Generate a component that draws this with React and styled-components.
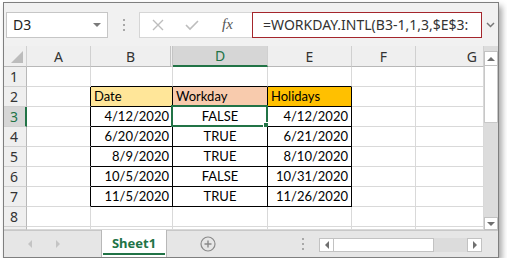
import React from 'react'
import styled, { createGlobalStyle } from 'styled-components'

const GlobalStyle = createGlobalStyle`
  html, body {
    margin: 0;
    padding: 0;
    background: #fff;
  }
  body {
    font-family: "Noto Sans", "Open Sans", sans-serif;
  }
`

const Page = styled.div`
  padding: 2px 0 0 3px;
`

const Window = styled.div`
  box-sizing: border-box;
  width: 496px;
  height: 256px;
  border: 1px solid #7f7f7f;
  background: #fff;
  box-shadow: 3px 4px 6px rgba(0, 0, 0, 0.35);
  display: flex;
  flex-direction: column;
  overflow: hidden;
`

const FormulaBar = styled.div`
  flex: none;
  height: 43px;
  background: #f1f1f1;
  display: flex;
  align-items: center;
  padding-left: 2px;
`

const NameBox = styled.div`
  box-sizing: border-box;
  width: 102px;
  height: 26px;
  background: #fff;
  border: 1px solid #c6c6c6;
  display: flex;
  align-items: center;
  justify-content: space-between;
  padding: 0 6px 0 6px;
  font-size: 14px;
  color: #222;
`

const Grip = styled.div`
  width: 2px;
  margin: 0 14px 0 15px;
  display: flex;
  flex-direction: column;
  gap: 3px;

  > span {
    width: 2px;
    height: 2px;
    background: #a8a8a8;
  }
`

const ButtonBox = styled.div`
  box-sizing: border-box;
  width: 113px;
  height: 26px;
  background: #fff;
  border: 1px solid #d6d6d6;
  border-right: none;
  display: flex;
  align-items: center;
  padding-left: 12px;
  gap: 21px;
`

const Fx = styled.span`
  font-family: "Liberation Serif", "DejaVu Serif", serif;
  font-style: italic;
  font-size: 15px;
  color: #555;
  margin-left: 2px;
`

const FormulaInput = styled.div`
  box-sizing: border-box;
  width: 230px;
  height: 26px;
  background: #fff;
  border: 1px solid #a4262c;
  display: flex;
  align-items: center;
  padding-left: 10px;
  font-size: 14px;
  color: #333;
  white-space: nowrap;
  overflow: hidden;
`

const Expand = styled.div`
  width: 16px;
  display: flex;
  justify-content: center;
`

const SheetArea = styled.div`
  flex: none;
  height: 184px;
  display: flex;
`

const Grid = styled.div`
  flex: 1;
  display: grid;
  grid-template-columns: 23px 64px 82px 95px 84px 64px 1fr;
  grid-template-rows: 21px repeat(8, 20px) 1fr;
  overflow: hidden;
`

const Corner = styled.div`
  box-sizing: border-box;
  background: #efefef;
  border-right: 1px solid #d0d0d0;
  border-bottom: 1px solid #b8b8b8;
  display: flex;
  align-items: flex-end;
  justify-content: flex-end;
  padding: 0 3px 3px 0;
`

const ColHead = styled.div`
  box-sizing: border-box;
  background: ${p => (p.$active ? '#d6d6d6' : '#efefef')};
  color: ${p => (p.$active ? '#217346' : '#333')};
  border-right: ${p => (p.$hidden ? '3px double #c4c4c4' : '1px solid #d0d0d0')};
  border-bottom: ${p => (p.$active ? '2px solid #217346' : '1px solid #b8b8b8')};
  font-size: 14px;
  display: flex;
  align-items: center;
  justify-content: ${p => (p.$end ? 'flex-end' : 'center')};
  padding-right: ${p => (p.$end ? '6px' : '0')};
`

const RowHead = styled.div`
  box-sizing: border-box;
  background: ${p => (p.$active ? '#d6d6d6' : '#efefef')};
  color: ${p => (p.$active ? '#217346' : '#333')};
  border-right: ${p => (p.$active ? '2px solid #217346' : '1px solid #b8b8b8')};
  border-bottom: 1px solid #d0d0d0;
  font-size: 14px;
  display: flex;
  align-items: center;
  padding-left: 6px;
`

const Cell = styled.div`
  box-sizing: border-box;
  position: relative;
  background: ${p => p.$bg || '#fff'};
  border-right: 1px solid ${p => (p.$br ? '#000' : '#d9d9d9')};
  border-bottom: 1px solid ${p => (p.$bb ? '#000' : '#d9d9d9')};
  font-family: Lato, "Carlito", "Liberation Sans", sans-serif;
  font-size: 13px;
  line-height: 19px;
  color: #000;
  padding: 0 3px;
  text-align: ${p => p.$align || 'left'};
  white-space: nowrap;
`

const Selection = styled.div`
  position: absolute;
  top: -2px;
  left: -2px;
  right: -1px;
  bottom: -1px;
  border: 2px solid #217346;
  pointer-events: none;

  &::after {
    content: '';
    position: absolute;
    right: -4px;
    bottom: -4px;
    width: 5px;
    height: 5px;
    background: #217346;
    border: 1px solid #fff;
  }
`

const VScroll = styled.div`
  flex: none;
  width: 14px;
  background: #dcdcdc;
  display: flex;
  flex-direction: column;
  padding-top: 5px;
  box-sizing: border-box;
`

const ArrowBox = styled.div`
  box-sizing: border-box;
  width: ${p => p.$w || 14}px;
  height: ${p => p.$h || 14}px;
  background: #fff;
  border: 1px solid #c2c2c2;
  display: flex;
  align-items: center;
  justify-content: center;
  flex: none;
`

const VThumb = styled.div`
  box-sizing: border-box;
  flex: none;
  height: 57px;
  background: #fff;
  border: 1px solid #c8c8c8;
  border-top: none;
`

const Spacer = styled.div`
  flex: 1;
`

const TabBar = styled.div`
  flex: 1;
  background: #e6e6e6;
  border-top: 1px solid #c8c8c8;
  display: flex;
  align-items: stretch;
`

const TabNav = styled.div`
  width: 97px;
  display: flex;
  align-items: center;
  padding-left: 24px;
  gap: 24px;
  box-sizing: border-box;
`

const SheetTab = styled.div`
  box-sizing: border-box;
  width: 66px;
  margin-top: -1px;
  background: #fff;
  border-left: 1px solid #b8b8b8;
  border-right: 1px solid #b8b8b8;
  display: flex;
  align-items: center;
  justify-content: center;
  font-size: 13px;
  font-weight: 700;
  color: #217346;
  position: relative;
  padding-bottom: 2px;

  &::after {
    content: '';
    position: absolute;
    left: 1px;
    right: 1px;
    bottom: 2px;
    height: 2px;
    background: #217346;
  }
`

const AddSheet = styled.div`
  display: flex;
  align-items: center;
  margin-left: 33px;
`

const HGrip = styled.div`
  display: flex;
  flex-direction: column;
  justify-content: center;
  gap: 3px;
  margin-left: 86px;

  > span {
    width: 2px;
    height: 2px;
    background: #a8a8a8;
  }
`

const HScroll = styled.div`
  align-self: center;
  margin-left: 15px;
  margin-top: 2px;
  width: 163px;
  height: 14px;
  background: #dcdcdc;
  display: flex;
`

const HThumb = styled.div`
  box-sizing: border-box;
  width: 100px;
  background: #fff;
  border: 1px solid #c2c2c2;
  border-left: none;
`

const Tri = ({ dir, color = '#777', size = 4 }) => {
  const pts = {
    down: `0,0 ${size * 2},0 ${size},${size}`,
    up: `0,${size} ${size * 2},${size} ${size},0`,
    left: `${size},0 ${size},${size * 2} 0,${size}`,
    right: `0,0 0,${size * 2} ${size},${size}`,
  }[dir]
  const horiz = dir === 'left' || dir === 'right'
  return (
    <svg width={horiz ? size : size * 2} height={horiz ? size * 2 : size}>
      <polygon points={pts} fill={color} />
    </svg>
  )
}

const data = [
  ['4/12/2020', 'FALSE', '4/12/2020'],
  ['6/20/2020', 'TRUE', '6/21/2020'],
  ['8/9/2020', 'TRUE', '8/10/2020'],
  ['10/5/2020', 'FALSE', '10/31/2020'],
  ['11/5/2020', 'TRUE', '11/26/2020'],
]

const cols = ['A', 'B', 'D', 'E', 'F', 'G']
const tableCols = ['B', 'D', 'E']
const headBg = { B: '#ffe699', D: '#f8cbad', E: '#ffc000' }
const headText = { B: 'Date', D: 'Workday', E: 'Holidays' }

const cellProps = (row, col) => {
  const inTable = row >= 2 && row <= 7 && tableCols.includes(col)
  const p = {
    $br: inTable || (col === 'A' && row >= 2 && row <= 7),
    $bb: inTable || (row === 1 && tableCols.includes(col)),
  }
  if (row === 2 && headBg[col]) {
    p.$bg = headBg[col]
    p.text = headText[col]
  }
  if (row >= 3 && row <= 7) {
    const r = data[row - 3]
    if (col === 'B') { p.text = r[0]; p.$align = 'right' }
    if (col === 'D') { p.text = r[1]; p.$align = 'center' }
    if (col === 'E') { p.text = r[2]; p.$align = 'right' }
  }
  return p
}

export default function App() {
  const rows = [1, 2, 3, 4, 5, 6, 7, 8]
  return (
    <Page>
      <GlobalStyle />
      <Window>
        <FormulaBar>
          <NameBox>
            <span>D3</span>
            <Tri dir="down" color="#7a7a7a" size={4} />
          </NameBox>
          <Grip><span /><span /><span /></Grip>
          <ButtonBox>
            <svg width="12" height="12">
              <path d="M1 1L11 11M11 1L1 11" stroke="#bdbdbd" strokeWidth="1.4" />
            </svg>
            <svg width="14" height="12">
              <path d="M1 6L5 10L13 2" stroke="#bdbdbd" strokeWidth="1.6" fill="none" />
            </svg>
            <Fx>fx</Fx>
          </ButtonBox>
          <FormulaInput>=WORKDAY.INTL(B3-1,1,3,$E$3:</FormulaInput>
          <Expand>
            <svg width="9" height="6">
              <path d="M1 1L4.5 4.5L8 1" stroke="#777" strokeWidth="1.5" fill="none" />
            </svg>
          </Expand>
        </FormulaBar>

        <SheetArea>
          <Grid>
            <Corner>
              <svg width="12" height="12">
                <polygon points="12,0 12,12 0,12" fill="#bcbcbc" />
              </svg>
            </Corner>
            {cols.map(c => (
              <ColHead key={c} $active={c === 'D'} $hidden={c === 'B'} $end={c === 'G'}>
                {c}
              </ColHead>
            ))}
            {rows.map(r => (
              <React.Fragment key={r}>
                <RowHead $active={r === 3}>{r}</RowHead>
                {cols.map(c => {
                  const { text, ...p } = cellProps(r, c)
                  return (
                    <Cell key={c} {...p}>
                      {text}
                      {r === 3 && c === 'D' && <Selection />}
                    </Cell>
                  )
                })}
              </React.Fragment>
            ))}
            <RowHead />
            {cols.map(c => (
              <Cell key={c} />
            ))}
          </Grid>
          <VScroll>
            <ArrowBox $h={15}>
              <Tri dir="up" color="#707070" size={4} />
            </ArrowBox>
            <VThumb />
            <Spacer />
            <ArrowBox $h={13}>
              <Tri dir="down" color="#707070" size={4} />
            </ArrowBox>
          </VScroll>
        </SheetArea>

        <TabBar>
          <TabNav>
            <Tri dir="left" color="#c4c4c4" size={4} />
            <Tri dir="right" color="#c4c4c4" size={4} />
          </TabNav>
          <SheetTab>Sheet1</SheetTab>
          <AddSheet>
            <svg width="16" height="16">
              <circle cx="8" cy="8" r="7" stroke="#8a8a8a" strokeWidth="1.2" fill="none" />
              <path d="M8 4.5V11.5M4.5 8H11.5" stroke="#8a8a8a" strokeWidth="1.4" />
            </svg>
          </AddSheet>
          <HGrip><span /><span /><span /></HGrip>
          <HScroll>
            <ArrowBox $w={15}>
              <Tri dir="left" color="#707070" size={4} />
            </ArrowBox>
            <HThumb />
            <Spacer />
            <ArrowBox $w={15}>
              <Tri dir="right" color="#707070" size={4} />
            </ArrowBox>
          </HScroll>
        </TabBar>
      </Window>
    </Page>
  )
}
